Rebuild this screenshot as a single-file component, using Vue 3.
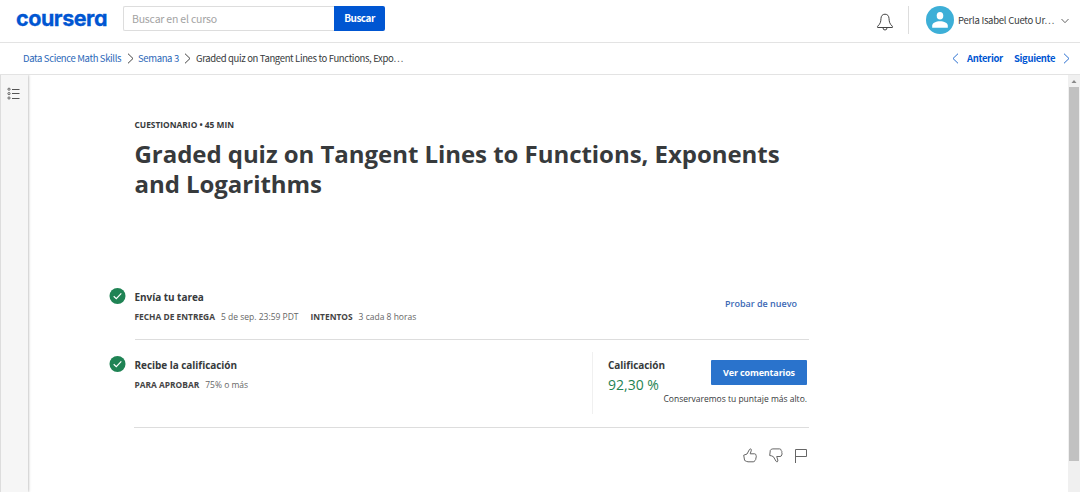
<script setup>
const tasks = [
  {
    title: 'Envía tu tarea',
    facts: [
      { label: 'FECHA DE ENTREGA', value: '5 de sep. 23:59 PDT' },
      { label: 'INTENTOS', value: '3 cada 8 horas' },
    ],
  },
  {
    title: 'Recibe la calificación',
    facts: [{ label: 'PARA APROBAR', value: '75% o más' }],
  },
]
</script>

<template>
  <div class="page">
    <header class="top">
      <div class="logo">coursera</div>
      <div class="search">
        <div class="field">Buscar en el curso</div>
        <button class="search-btn">Buscar</button>
      </div>
      <svg class="bell" width="18" height="20" viewBox="0 0 18 20">
        <path d="M9 2.2C6.4 2.2 5.1 4 5 6.4C4.8 10 4.4 11.7 1.6 14.3V15.5H16.4V14.3C13.6 11.7 13.2 10 13 6.4C12.9 4 11.6 2.2 9 2.2ZM7 15.8Q7 18 9 18Q11 18 11 15.8" />
      </svg>
      <div class="rule"></div>
      <svg class="avatar" width="28" height="28" viewBox="0 0 28 28">
        <circle cx="14" cy="14" r="14" fill="#3dafd7" />
        <ellipse cx="14" cy="9.8" rx="3.3" ry="3.8" fill="#fff" />
        <path d="M6.2 21.8V19.6C6.2 17 10 15.2 14 15.2S21.8 17 21.8 19.6V21.8Z" fill="#fff" />
      </svg>
      <div class="user">Perla Isabel Cueto Ur…</div>
      <svg class="caret" width="8" height="6" viewBox="0 0 8 6"><path d="M.5 1L4 4.7L7.5 1" /></svg>
    </header>

    <nav class="crumbs">
      <a class="c1">Data Science Math Skills</a>
      <svg class="chev s1" width="7" height="11" viewBox="0 0 7 11"><path d="M1 .7L6 5.5L1 10.3" /></svg>
      <a class="c2">Semana 3</a>
      <svg class="chev s2" width="7" height="11" viewBox="0 0 7 11"><path d="M1 .7L6 5.5L1 10.3" /></svg>
      <span class="c3">Graded quiz on Tangent Lines to Functions, Expo…</span>
      <div class="pager">
        <svg class="chev blue" width="7" height="11" viewBox="0 0 7 11"><path d="M6 .7L1 5.5L6 10.3" /></svg>
        <b class="prev">Anterior</b>
        <b class="next">Siguiente</b>
        <svg class="chev blue" width="7" height="11" viewBox="0 0 7 11"><path d="M1 .7L6 5.5L1 10.3" /></svg>
      </div>
    </nav>

    <div class="body">
      <aside class="side">
        <svg width="13" height="13" viewBox="0 0 13 13">
          <g fill="none" stroke="#555" stroke-width=".9">
            <circle cx="2" cy="2.2" r="1.1" /><circle cx="2" cy="6.6" r="1.1" /><circle cx="2" cy="11" r="1.1" />
            <path d="M5 2.5H12.5M5 6.5H12.5M5 11.5H12.5" stroke-width="1" />
          </g>
        </svg>
      </aside>

      <main class="main">
        <div class="kind">CUESTIONARIO • 45 MIN</div>
        <h1>Graded quiz on Tangent Lines to Functions, Exponents<br />and Logarithms</h1>

        <section v-for="(t, i) in tasks" :key="t.title" class="task" :class="i ? 'grade' : 'submit'">
          <svg class="check" width="17" height="16" viewBox="0 0 17 16">
            <circle cx="8.5" cy="8" r="8" fill="#1f8354" />
            <path d="M4.7 8.2L7.3 10.7L12.3 5.4" fill="none" stroke="#fff" stroke-width="1.2" />
          </svg>
          <div class="info">
            <h2>{{ t.title }}</h2>
            <div class="facts">
              <span v-for="f in t.facts" :key="f.label" class="fact"><b>{{ f.label }}</b><span>{{ f.value }}</span></span>
            </div>
          </div>
          <a v-if="!i" class="retry">Probar de nuevo</a>
          <div v-else class="score">
            <div class="mark">
              <h2>Calificación</h2>
              <div class="percent">92,30 %</div>
            </div>
            <div class="action">
              <button class="view">Ver comentarios</button>
              <div class="keep">Conservaremos tu puntaje más alto.</div>
            </div>
          </div>
        </section>

        <div class="feedback">
          <svg width="14" height="15" viewBox="0 0 14 15"><path d="M.7 7.2L4 6L6.5 1.4Q7.2 .5 8.1 1.2Q8.6 1.8 8.2 2.8L7.2 5.8H11.6Q13.2 6 13.1 7.6Q13.6 8.8 12.9 10Q13.1 11.6 12 12.3Q11.8 13.8 10.2 13.8H5Q3.4 13.6 1.6 12.4Z" /></svg>
          <svg width="14" height="15" viewBox="0 0 14 15"><path d="M.7 7.5L1.3 2.4Q2 .9 3.8 .9H10.6Q12.2 1 12.2 2.5Q13.2 3.4 12.8 4.7Q13.5 6 12.7 7Q12.6 8.4 11 8.5H7.7L8.8 12Q9.1 13.2 8.3 13.8Q7.4 14 6.9 13L4.4 8.7L2.4 7.8Z" /></svg>
          <svg width="14" height="15" viewBox="0 0 14 15"><path d="M1.5 15V1.5H12.5V8.5H1.5" /></svg>
        </div>
      </main>

      <div class="scroll">
        <svg width="12" height="12" viewBox="0 0 12 12"><path d="M3.5 8L6 5L8.5 8Z" fill="#888" /></svg>
        <div class="thumb"></div>
      </div>
    </div>
  </div>
</template>

<style>
body {
  background: #fff;
  overflow: hidden;
}
</style>

<style scoped>
* {
  box-sizing: border-box;
}
.page {
  width: 1080px;
  height: 492px;
  overflow: hidden;
  display: flex;
  flex-direction: column;
  font-family: "Open Sans", sans-serif;
  color: #373a3c;
  white-space: nowrap;
}
svg {
  display: block;
  flex: none;
}
h1,
h2 {
  margin: 0;
}
button {
  border: 0;
  padding: 0;
  color: #fff;
  font-family: inherit;
}
.top {
  height: 43px;
  flex: none;
  display: flex;
  border-bottom: 1px solid #e3e3e3;
  font-family: "Noto Sans CJK SC", sans-serif;
}
.logo {
  width: 107px;
  padding-left: 16px;
  font: 700 21.5px/37px Inter, sans-serif;
  font-feature-settings: "cv11";
  letter-spacing: -0.45px;
  color: #0056d2;
  -webkit-text-stroke: 0.3px #0056d2;
}
.search {
  display: flex;
  width: 262px;
  height: 25px;
  margin: 6px 0 0 16px;
}
.field {
  width: 211px;
  border: 1px solid #ddd;
  border-right: 0;
  border-radius: 2px 0 0 2px;
  padding-left: 8px;
  font-size: 10.5px;
  letter-spacing: -0.2px;
  line-height: 23px;
  color: #a3a3a3;
}
.search-btn {
  width: 51px;
  border-radius: 0 2px 2px 0;
  background: #0056d2;
  font-size: 10px;
  letter-spacing: -0.5px;
  font-weight: 700;
  line-height: 22px;
  padding-bottom: 2px;
}
.bell {
  margin: 12px 0 0 491px;
}
.bell path,
.caret path,
.chev path,
.feedback path {
  fill: none;
  stroke: #444;
  stroke-width: 1;
}
.caret path,
.feedback path {
  stroke: #666;
}
.rule {
  width: 1px;
  height: 28px;
  margin: 6px 0 0 14px;
  background: #ddd;
}
.avatar {
  margin: 6px 0 0 17px;
}
.user {
  width: 103px;
  margin-left: 4px;
  font-size: 9.5px;
  letter-spacing: -0.25px;
  line-height: 40px;
}
.caret {
  margin-top: 18px;
}
.crumbs {
  height: 32px;
  flex: none;
  display: flex;
  align-items: center;
  padding: 0 10px 0 23px;
  border-bottom: 1px solid #e3e3e3;
  font: 9.5px/28px "Noto Sans CJK SC", sans-serif;
  letter-spacing: -0.35px;
}
.crumbs a,
.c3,
.crumbs b {
  height: 30px;
}
.crumbs a {
  color: #2a67b8;
}
.c1 {
  width: 104px;
}
.c2 {
  width: 42px;
  margin-left: 4px;
}
.s2 {
  margin: 0 5px 0 4px;
}
.pager {
  margin-left: auto;
  display: flex;
  align-items: center;
  color: #0056d2;
}
.prev {
  width: 47px;
  margin-left: 8px;
}
.next {
  width: 49px;
}
.chev.blue path {
  stroke: #2a6fd0;
}
.body {
  flex: 1;
  display: flex;
}
.side {
  width: 28px;
  padding: 12px 0 0 6px;
  background: #f6f6f6;
  border-left: 1px solid #ddd;
  box-shadow: 0 0 3px rgba(0, 0, 0, 0.4);
  clip-path: inset(0 -5px 0 0);
}
.main {
  width: 782px;
  padding: 44px 0 0 81px;
}
.kind {
  margin-left: 25.5px;
  font-size: 8.4px;
  font-weight: 700;
  line-height: 12px;
}
h1 {
  margin: 8px 0 0 25.5px;
  font-size: 24px;
  font-weight: 700;
  line-height: 29.5px;
  letter-spacing: -0.045px;
}
.task {
  display: flex;
  width: 700px;
}
.submit {
  margin-top: 81px;
  height: 61px;
}
.grade {
  height: 87px;
  padding-top: 7px;
}
.check {
  margin-top: 9px;
}
.info {
  flex: 1;
  margin-left: 8.5px;
}
.submit .info,
.submit .retry {
  border-bottom: 1px solid #ddd;
}
h2 {
  margin-top: 10px;
  font-size: 10px;
  font-weight: 700;
  line-height: 16px;
  letter-spacing: -0.05px;
}
.facts {
  display: flex;
  gap: 12px;
  margin-top: 5px;
  font-size: 8.5px;
  line-height: 14px;
}
.fact {
  display: flex;
  gap: 6px;
  color: #666;
}
.fact b {
  font-size: 8.4px;
  font-weight: 700;
  color: #444;
}
.retry {
  width: 84px;
  padding-top: 17px;
  font-size: 9px;
  font-weight: 600;
  line-height: 16px;
  color: #3b68b5;
}
.score {
  display: flex;
  width: 217px;
  height: 62px;
  margin-top: 5px;
  border-left: 1px solid #f0f0f0;
}
.mark {
  width: 56px;
  margin-left: 15px;
}
.mark h2 {
  margin-top: 5px;
}
.percent {
  font-size: 14px;
  line-height: 22px;
  margin-top: 1px;
  color: #1f8354;
}
.action {
  width: 143px;
  display: flex;
  flex-direction: column;
  align-items: flex-end;
}
.view {
  width: 96px;
  height: 25px;
  flex: none;
  margin-top: 8px;
  background: #2a73cc;
  border-radius: 1px;
  font-size: 9px;
  font-weight: 700;
  letter-spacing: -0.15px;
}
.keep {
  margin-top: 7px;
  font-size: 8.5px;
  line-height: 14px;
}
.feedback {
  display: flex;
  gap: 11.5px;
  margin-left: 25px;
  padding: 20px 0 0 609px;
  width: 675px;
  border-top: 1px solid #ddd;
}
.scroll {
  width: 12px;
  margin-left: auto;
  background: #f0f0f0;
}
.thumb {
  width: 10px;
  height: 374px;
  margin-left: 1px;
  background: #c1c1c1;
}
</style>
